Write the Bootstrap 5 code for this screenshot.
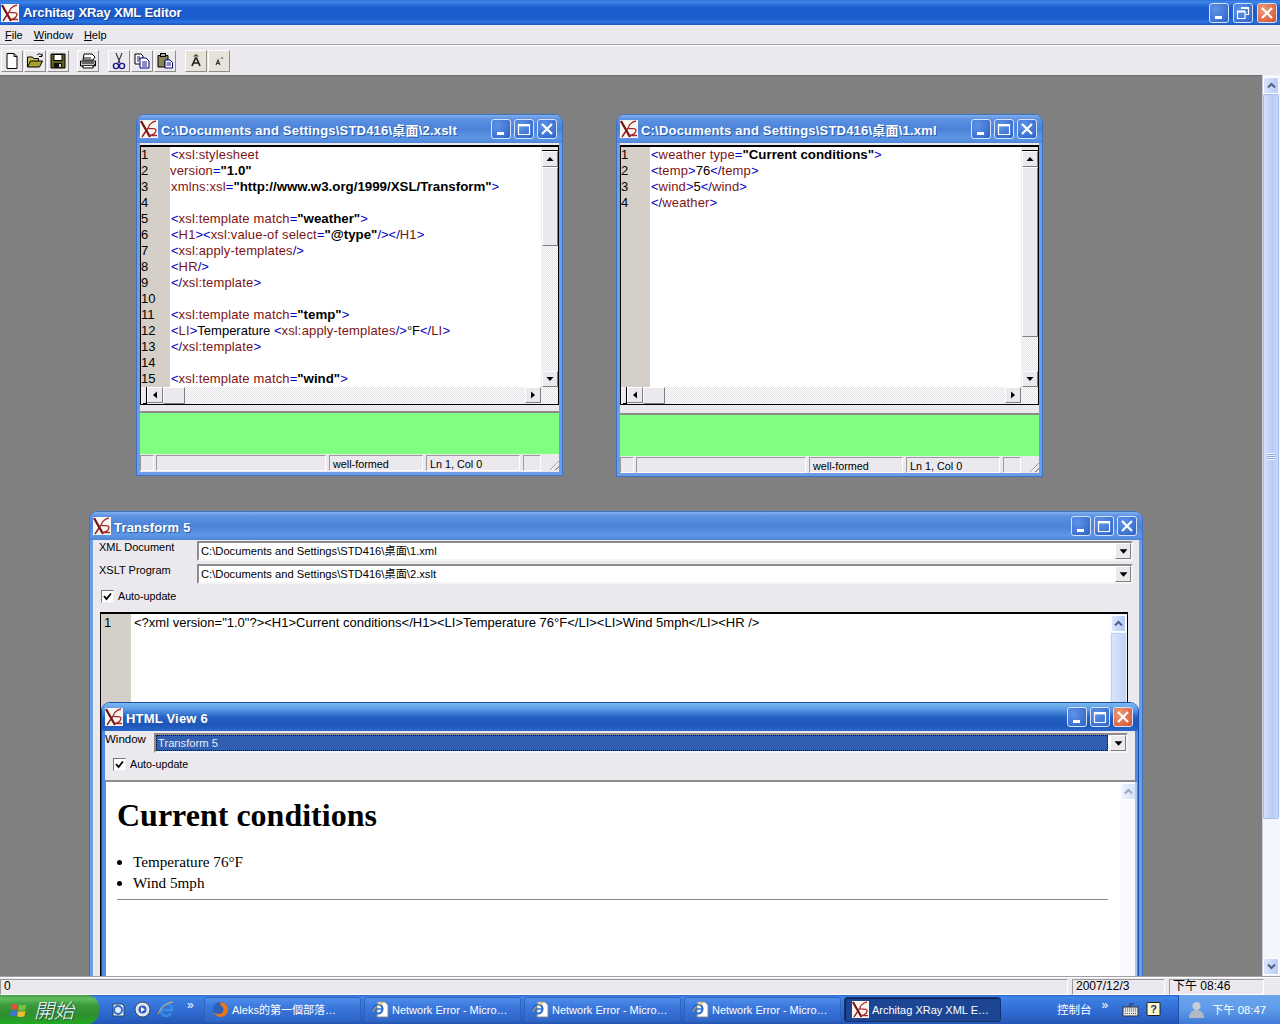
<!DOCTYPE html>
<html lang="zh-Hant">
<head>
<meta charset="UTF-8">
<title>Architag XRay XML Editor</title>
<link href="https://cdn.jsdelivr.net/npm/bootstrap@5.3.0/dist/css/bootstrap.min.css" rel="stylesheet">
<style>
html, body { height: 100%; overflow: hidden; }
body { width: 1280px; height: 1024px; background: #ebe9ed; color: #000; font: 13px/16px "Liberation Sans", "Noto Sans CJK TC", sans-serif; }
.app { height: 1024px; }

/* main window chrome */
.main-title { height: 25px; background: linear-gradient(#2f6fd8 0, #3f86ea 2px, #1d5fd0 7px, #1a5ccb 18px, #2a74e4 22px, #1a55b8 25px); color: #fff; padding: 0 3px 0 1px; }
.title-text { font-weight: 700; font-size: 13px; letter-spacing: -.1px; text-shadow: 1px 1px 0 #16408c; white-space: nowrap; padding-top: 1px; }
.logo { width: 18px; height: 18px; flex: none; }
.wbtn { width: 20px; height: 20px; flex: none; border: 1px solid #d5e2f8; border-radius: 3px; background: radial-gradient(circle at 30% 30%, #5f93e8, #2c62c8); display: flex; align-items: center; justify-content: center; }
.wbtn svg { width: 14px; height: 14px; }
.wbtn.close { background: radial-gradient(circle at 30% 30%, #ef9a78, #d6502c); }
.menubar { height: 20px; padding-left: 5px; gap: 11px; font-size: 11px; line-height: 20px; border-bottom: 1px solid #9d9da1; box-shadow: 0 1px 0 #fff; }
.toolbar { height: 29px; padding: 4px 0 0 1px; margin-top: 1px; }
.tbtn { width: 22px; height: 22px; margin-right: 1px; flex: none; background: #ece9ec; border: 1px solid; border-color: #fff #8d8d8d #8d8d8d #fff; display: flex; align-items: center; justify-content: center; padding: 0; }
.tbtn svg { width: 18px; height: 18px; }
.tbtn.warm { background: #e6e3d8; }
.tsep { width: 8px; flex: none; }
.tsep.sm { width: 7px; }
.workspace { height: 901px; }
.canvas { background: #808080; border-top: 1px solid #6b6b6b; overflow: hidden; }
.main-status { height: 19px; border-top: 1px solid #a0a0a4; box-shadow: inset 0 1px 0 #fff; font-size: 12px; padding-top: 2px; }
.spanel { border: 1px solid; border-color: #9a9a9a #fff #fff #9a9a9a; height: 16px; line-height: 13px; padding-left: 3px; white-space: nowrap; }

/* xp scrollbar on the workspace */
.xp-scroll { width: 18px; background: #f3f6fd; border-left: 1px solid #ccd; padding: 2px 1px 1px 0; }
.xp-btn { height: 17px; flex: none; border: 1px solid #fff; border-radius: 2px; background: linear-gradient(90deg, #dbe6fd, #b7cbf8); display: flex; align-items: center; justify-content: center; }
.xp-btn svg { width: 9px; height: 7px; }
.xp-thumb { height: 725px; flex: none; border: 1px solid #a8bdea; border-radius: 2px; background: linear-gradient(90deg, #d4e1fc, #b9ccf8 60%, #c8d8fb); display: flex; align-items: center; justify-content: center; }
.xp-grip { width: 8px; height: 7px; background: repeating-linear-gradient(#eef3fe 0 1px, #8fa9e0 1px 2px); }

/* mdi child windows */
.win { position: absolute; border: 3px solid #6c9ee8; border-top: 0; border-radius: 8px 8px 0 0; background: #ebe9ed; box-shadow: 0 0 0 1px #3c72c4; }
.win-a { left: 137px; top: 39px; width: 425px; height: 360px; }
.win-b { left: 617px; top: 39px; width: 425px; height: 361px; }
.win-c { left: 90px; top: 436px; width: 1052px; height: 500px; }
.win-d { left: 102px; top: 627px; width: 1036px; height: 300px; border-color: #4f8ae0; box-shadow: 0 0 0 1px #1c4fa8; }
.win-title { height: 28px; margin: 0 -3px; padding: 0 5px 0 3px; gap: 3px; color: #fff; border-radius: 7px 7px 0 0; background: linear-gradient(#7fb0ee 0, #5d92e2 4px, #4b82d8 14px, #5f97e6 23px, #4f86d8 28px); flex: none; }
.win-title .wbtns { gap: 3px; }
.win-d .win-title { background: linear-gradient(#7db8f2 0, #5c9ce6 6px, #2462c4 14px, #1d56b8 22px, #2a68cc 28px); }
.win-name { font-weight: 700; font-size: 13px; letter-spacing: .2px; text-shadow: 1px 1px 0 #2b5aa8; white-space: nowrap; padding-top: 3px; }

/* code editor */
.editor { border: 1px solid #000; border-top-width: 2px; background: #fff; overflow: hidden; margin-top: 2px; flex: none; }
.gutter { width: 29px; flex: none; background: #d4d0c8; padding-left: 0; }
.code { padding-left: 1px; min-width: 0; overflow: hidden; }
.code div, .gutter div { height: 16px; line-height: 16px; white-space: nowrap; }
.code .ml { margin-left: -1px; }
.b { color: #0000c0; }
.m { color: #7c1414; letter-spacing: .15px; }
.v { font-weight: 700; color: #000; font-size: 13.3px; }

/* classic scrollbars */
.sbar-v { width: 17px; flex: none; border-left: 1px solid #f0f0f0; background: repeating-conic-gradient(#fff 0 25%, #e2e0e4 0 50%) 0 0/2px 2px; }
.sbar-box { height: 4px; flex: none; border-bottom: 1px solid #000; background: #ebe9ed; }
.sbtn { width: 16px; height: 16px; flex: none; background: #ebe9ed; border: 1px solid; border-color: #fff #808080 #808080 #fff; display: flex; align-items: center; justify-content: center; }
.sbtn svg { width: 8px; height: 8px; }
.sthumb { width: 16px; flex: none; background: #ebe9ed; border: 1px solid; border-color: #fff #808080 #808080 #fff; }
.sbar-h { height: 17px; background: repeating-conic-gradient(#fff 0 25%, #e2e0e4 0 50%) 0 0/2px 2px; padding-right: 17px; }
.sbar-h .hbox { width: 4px; flex: none; border-right: 1px solid #000; border-bottom: 1px solid #000; background: #ebe9ed; margin-left: 2px; }
.hthumb { width: 22px; flex: none; background: #ebe9ed; border: 1px solid; border-color: #fff #808080 #808080 #fff; }
.split { height: 8px; flex: none; border-bottom: 2px solid #8c8c8c; }
.split.wide { height: 10px; }
.ok-pane { height: 41px; flex: none; background: #80ff80; }
.win-status { height: 18px; flex: none; padding: 1px 0 0 0; font-size: 10.8px; }
.cell { height: 16px; line-height: 16px; border: 1px solid; border-color: #9a9a9a #fff #fff #9a9a9a; padding-left: 3px; white-space: nowrap; flex: none; }
.c1 { width: 14px; }
.c2 { width: 170px; margin-left: 2px; }
.c3 { width: 94px; margin-left: 3px; }
.c4 { width: 18px; margin-left: 3px; }
.grip { width: 12px; height: 12px; margin-top: 3px; background: repeating-linear-gradient(135deg, transparent 0 2px, #9a9a9a 2px 3px, #fff 3px 4px); clip-path: polygon(100% 0, 100% 100%, 0 100%); }

/* form rows in transform and html view */
.combo { height: 20px; background: #fff; border: 2px solid; border-color: #8c8c8c #f4f4f4 #f4f4f4 #8c8c8c; padding-left: 0; line-height: 16px; font-size: 11.2px; white-space: nowrap; }
.combo .txt { padding-left: 2px; }
.combo .drop { width: 16px; height: 16px; flex: none; background: #ebe9ed; border: 1px solid; border-color: #fff #808080 #808080 #fff; display: flex; align-items: center; justify-content: center; }
.combo .drop svg { width: 9px; height: 9px; }
.combo.sel .txt { background: #2f5fae; color: #e6ecf8; outline: 1px dotted #111; outline-offset: -1px; margin-right: 2px; }
.flabel { width: 104px; flex: none; padding-left: 6px; line-height: 12px; height: 18px; font-size: 11px; }
.flabel.win-lab { width: 49px; padding-left: 0; font-size: 11.5px; }
.checkbox { width: 13px; height: 13px; flex: none; background: #fff; border: 1px solid; border-color: #777 #eee #eee #777; display: flex; align-items: center; justify-content: center; }
.checkbox svg { width: 9px; height: 9px; }
.auto { gap: 4px; font-size: 10.7px; }
.auto-c { height: 16px; padding-left: 8px; }
.auto-d { height: 18px; padding-left: 8px; margin-bottom: 7px; }
.rowc { height: 24px; }
.rowc.first { padding-top: 1px; }
.rowd { height: 24px; padding-top: 2px; }
.xp-small { width: 17px; flex: none; background: #f3f6fd; }
.xp-small .up { height: 17px; margin: 1px; border: 1px solid #fff; background: linear-gradient(90deg, #dbe6fd, #b7cbf8); display: flex; align-items: center; justify-content: center; flex: none; }
.xp-small .up svg { width: 9px; height: 7px; }
.xp-small .th { flex: none; height: 90px; margin: 0 1px; border: 1px solid #c4d2f0; background: linear-gradient(90deg, #d8e4fc, #c4d4f8); }
.pale { opacity: .55; }
.combo-c { margin-right: 6px; }
.combo-d { margin-right: 7px; }
.editor-c { margin: 8px 11px 0 7px; flex: 1 1 auto; }
.editor-c .gutter { width: 30px; padding: 1px 0 0 3px; }
.editor-c .code { padding: 1px 0 0 3px; }
.html-view { border-top: 2px solid #8c8c8c; border-left: 1px solid #8c8c8c; background: #fff; font-family: "Liberation Serif", "Noto Serif CJK TC", serif; }
.html-body { padding: 15px 12px 0 11px; }
.html-body h1 { font: 700 32px/37px "Liberation Serif", serif; margin: 0 0 17px; }
.html-body ul { margin: 0 0 6px; padding-left: 16px; font-size: 15.2px; line-height: 21px; }
.html-body hr { margin: 0; opacity: 1; border: 0; border-top: 1px solid #888; width: 991px; }

/* taskbar */
.taskbar { height: 29px; background: linear-gradient(#2a63c8 0, #3f86ea 2px, #3a7be0 6px, #2d66cc 20px, #2356b6 29px); color: #fff; font-size: 11px; }
.start { width: 99px; flex: none; background: linear-gradient(#4a9a4c 0, #5fbf5c 4px, #3a9a3c 10px, #2f8f30 20px, #1faa20 29px); border-radius: 0 12px 12px 0; padding-left: 10px; gap: 6px; font: italic 300 20px/29px "Noto Sans CJK TC", sans-serif; text-shadow: 1px 1px 1px #245; }
.quick { width: 105px; flex: none; padding-left: 11px; gap: 7px; }
.quick svg { width: 17px; height: 17px; flex: none; }
.chev { font-size: 12px; line-height: 12px; margin-left: 5px; margin-top: -10px; }
.task { width: 157px; height: 25px; margin-right: 3px; flex: none; gap: 3px; padding-left: 7px; border-radius: 3px; border: 1px solid #2f63bd; background: linear-gradient(#4f8fea, #3a77dc 40%, #2f66c9); white-space: nowrap; overflow: hidden; }
.task svg { width: 17px; height: 17px; flex: none; }
.task.on { background: #1c4694; border-color: #123270; box-shadow: inset 1px 1px 1px #0e2558; }
.cp { width: 118px; flex: none; padding-left: 53px; gap: 5px; font-size: 11.5px; }
.tray-ic { gap: 6px; width: 56px; flex: none; }
.tray-ic svg { width: 17px; height: 17px; }
.tray { flex: 1; height: 29px; background: linear-gradient(#6aa6ee, #5e9ae8 50%, #3f7bd8); padding-left: 9px; gap: 7px; border-left: 1px solid #1d4fa8; font-size: 11.3px; }
.tray svg { width: 17px; height: 20px; flex: none; }
</style>
</head>
<body>
<svg width="0" height="0" class="position-absolute">
  <symbol id="x2" viewBox="0 0 18 18">
    <rect width="18" height="18" fill="#fbf6f2"/>
    <path d="M1 1 L10 17" stroke="#741212" stroke-width="2.2" fill="none"/>
    <path d="M2 17 L8 8" stroke="#8a1a1a" stroke-width="1.4" fill="none"/>
    <path d="M16 1 C11 2 8 6 8.5 8 C11 10 15 7 16 10 C16 13 13 15 9 15.5 L17 15.5" stroke="#a62828" stroke-width="1.3" fill="none"/>
  </symbol>
  <symbol id="min" viewBox="0 0 14 14"><rect x="3" y="10" width="7" height="3" fill="#fff"/></symbol>
  <symbol id="max" viewBox="0 0 14 14"><path d="M1.5 2.5h11v10h-11z" fill="none" stroke="#fff" stroke-width="1.2"/><rect x="1" y="2" width="12" height="2.4" fill="#fff"/></symbol>
  <symbol id="rest" viewBox="0 0 14 14"><path d="M5 1.5h7.5v7H10M1.5 5.5h7.5v7H1.5z" fill="none" stroke="#fff" stroke-width="1.2"/><rect x="1" y="4.5" width="8" height="2" fill="#fff"/><rect x="5" y="1" width="8" height="2" fill="#fff"/></symbol>
  <symbol id="cls" viewBox="0 0 14 14"><path d="M2 2l10 10M12 2L2 12" stroke="#fff" stroke-width="2.2"/></symbol>
  <symbol id="aup" viewBox="0 0 8 8"><path d="M4 2L7.5 6H.5z" fill="#000"/></symbol>
  <symbol id="adn" viewBox="0 0 8 8"><path d="M4 6L.5 2h7z" fill="#000"/></symbol>
  <symbol id="alf" viewBox="0 0 8 8"><path d="M2 4l4-3.5v7z" fill="#000"/></symbol>
  <symbol id="art" viewBox="0 0 8 8"><path d="M6 4L2 .5v7z" fill="#000"/></symbol>
  <symbol id="chk" viewBox="0 0 9 9"><path d="M1 4l2.5 3L8 1.5" stroke="#000" stroke-width="1.8" fill="none"/></symbol>
  <symbol id="xpup" viewBox="0 0 9 7"><path d="M1 5.5l3.5-3.5 3.5 3.5" stroke="#4d6185" stroke-width="2" fill="none"/></symbol>
  <symbol id="iedoc" viewBox="0 0 17 17">
    <path d="M5 1h8l3 3v12H5z" fill="#fff" stroke="#8a8a8a"/>
    <circle cx="6" cy="8" r="4.5" fill="none" stroke="#2a6fd0" stroke-width="2.2"/>
    <path d="M2 8h8" stroke="#2a6fd0" stroke-width="1.6"/>
    <path d="M1 11C3 5 9 2 11 3" stroke="#e8b030" stroke-width="1" fill="none"/>
  </symbol>
</svg>

<div class="app d-flex flex-column">
  <!-- main title -->
  <div class="main-title d-flex align-items-center">
    <svg class="logo me-1"><use href="#x2"/></svg>
    <span class="title-text">Architag XRay XML Editor</span>
    <div class="ms-auto d-flex gap-1">
      <div class="wbtn"><svg><use href="#min"/></svg></div>
      <div class="wbtn"><svg><use href="#rest"/></svg></div>
      <div class="wbtn close"><svg><use href="#cls"/></svg></div>
    </div>
  </div>
  <div class="menubar d-flex">
    <span><u>F</u>ile</span><span><u>W</u>indow</span><span><u>H</u>elp</span>
  </div>
  <div class="toolbar d-flex">
    <button class="tbtn" title="New"><svg viewBox="0 0 18 18"><path d="M4 1.5h7l3 3v12H4z" fill="#fff" stroke="#000"/><path d="M11 1.5v3h3" fill="none" stroke="#000"/></svg></button>
    <button class="tbtn" title="Open"><svg viewBox="0 0 18 18"><path d="M1.5 15V5h5l1 1.5h5V9" fill="#c8c060" stroke="#000"/><path d="M1.5 15l3-6h12l-3 6z" fill="#a8a030" stroke="#000"/><path d="M11 3c2-2 4-1 5 1M16 1.5V4.5h-3" fill="none" stroke="#000"/></svg></button>
    <button class="tbtn" title="Save"><svg viewBox="0 0 18 18"><path d="M2 2h14v14H2z" fill="#606018" stroke="#000"/><rect x="5" y="2.5" width="8" height="6" fill="#fff" stroke="#000"/><rect x="5" y="11" width="8" height="5" fill="#111"/><rect x="10" y="12" width="2" height="3" fill="#ccc"/></svg></button>
    <div class="tsep sm"></div>
    <button class="tbtn" title="Print"><svg viewBox="0 0 18 18"><path d="M5 2h8l3 3-2 3H4z" fill="#fff" stroke="#000"/><path d="M1.5 9h15v5h-15z" fill="#c8c8c8" stroke="#000"/><path d="M3 14h11l2-2M4 6h8M3 11h12" stroke="#000" fill="none"/><path d="M4 14v2h10v-2" fill="#fff" stroke="#000"/></svg></button>
    <div class="tsep"></div>
    <button class="tbtn" title="Cut"><svg viewBox="0 0 18 18"><path d="M6 1l4 10M12 1L8 11" stroke="#303030" stroke-width="1.1" fill="none"/><circle cx="6" cy="14" r="2.6" fill="none" stroke="#1a1a90" stroke-width="1.4"/><circle cx="12" cy="14" r="2.6" fill="none" stroke="#1a1a90" stroke-width="1.4"/></svg></button>
    <button class="tbtn" title="Copy"><svg viewBox="0 0 18 18"><path d="M2 2h6l2 2v8H2z" fill="#fff" stroke="#000"/><path d="M7 6h6l3 3v7H7z" fill="#fff" stroke="#00007a"/><path d="M4 5h3M4 7h3M4 9h2M9 10h5M9 12h5M9 14h5" stroke="#00007a" stroke-width=".9"/></svg></button>
    <button class="tbtn" title="Paste"><svg viewBox="0 0 18 18"><path d="M2 3.5h10V9H9v6H2z" fill="#8a8650" stroke="#000"/><rect x="4.5" y="1.5" width="5" height="3" fill="#aaa" stroke="#000"/><path d="M9 8h5l2.5 2.5V16H9z" fill="#fff" stroke="#00007a"/><path d="M10.5 11h4.5M10.5 13h4.5" stroke="#00007a" stroke-width=".9"/></svg></button>
    <div class="tsep"></div>
    <button class="tbtn warm" title="Larger"><svg viewBox="0 0 18 18"><path d="M5 14L8.5 6h1L13 14M6.5 11h5" stroke="#222" stroke-width="1.7" fill="none"/><path d="M9 2l3 2.5H6z" fill="#4a4a2a"/></svg></button>
    <button class="tbtn warm" title="Smaller"><svg viewBox="0 0 18 18"><path d="M6 13l2-5 2 5M6.8 11.5h2.4" stroke="#333" stroke-width="1.1" fill="none"/><path d="M12 5l1.5 1.6h-3z" fill="#4a4a2a"/></svg></button>
  </div>

  <div class="workspace d-flex">
    <div class="canvas flex-grow-1 position-relative">

      <!-- 2.xslt -->
      <div class="win win-a d-flex flex-column">
        <div class="win-title d-flex align-items-center">
          <svg class="logo"><use href="#x2"/></svg>
          <span class="win-name">C:\Documents and Settings\STD416\桌面\2.xslt</span>
          <div class="wbtns ms-auto d-flex"><div class="wbtn"><svg><use href="#min"/></svg></div><div class="wbtn"><svg><use href="#max"/></svg></div><div class="wbtn"><svg><use href="#cls"/></svg></div></div>
        </div>
        <div class="editor d-flex flex-column">
          <div class="d-flex" style="height:240px">
            <div class="gutter"><div>1</div><div>2</div><div>3</div><div>4</div><div>5</div><div>6</div><div>7</div><div>8</div><div>9</div><div>10</div><div>11</div><div>12</div><div>13</div><div>14</div><div>15</div></div>
            <div class="code flex-grow-1">
<div><span class="b">&lt;</span><span class="m">xsl:stylesheet</span></div>
<div class="ml"><span class="m">version</span><span class="b">=</span><span class="v">"1.0"</span></div>
<div><span class="m">xmlns:xsl</span><span class="b">=</span><span class="v">"http://www.w3.org/1999/XSL/Transform"</span><span class="b">&gt;</span></div>
<div></div>
<div><span class="b">&lt;</span><span class="m">xsl:template match</span><span class="b">=</span><span class="v">"weather"</span><span class="b">&gt;</span></div>
<div><span class="b">&lt;</span><span class="m">H1</span><span class="b">&gt;&lt;</span><span class="m">xsl:value-of select</span><span class="b">=</span><span class="v">"@type"</span><span class="b">/&gt;&lt;/</span><span class="m">H1</span><span class="b">&gt;</span></div>
<div><span class="b">&lt;</span><span class="m">xsl:apply-templates</span><span class="b">/&gt;</span></div>
<div><span class="b">&lt;</span><span class="m">HR</span><span class="b">/&gt;</span></div>
<div><span class="b">&lt;/</span><span class="m">xsl:template</span><span class="b">&gt;</span></div>
<div></div>
<div><span class="b">&lt;</span><span class="m">xsl:template match</span><span class="b">=</span><span class="v">"temp"</span><span class="b">&gt;</span></div>
<div><span class="b">&lt;</span><span class="m">LI</span><span class="b">&gt;</span>Temperature <span class="b">&lt;</span><span class="m">xsl:apply-templates</span><span class="b">/&gt;</span>°F<span class="b">&lt;/</span><span class="m">LI</span><span class="b">&gt;</span></div>
<div><span class="b">&lt;/</span><span class="m">xsl:template</span><span class="b">&gt;</span></div>
<div></div>
<div><span class="b">&lt;</span><span class="m">xsl:template match</span><span class="b">=</span><span class="v">"wind"</span><span class="b">&gt;</span></div>
            </div>
            <div class="sbar-v d-flex flex-column">
              <div class="sbar-box"></div>
              <div class="sbtn"><svg><use href="#aup"/></svg></div>
              <div class="sthumb" style="height:79px"></div>
              <div class="flex-grow-1"></div>
              <div class="sbtn"><svg><use href="#adn"/></svg></div>
            </div>
          </div>
          <div class="sbar-h d-flex">
            <div class="hbox"></div>
            <div class="sbtn"><svg><use href="#alf"/></svg></div>
            <div class="hthumb"></div>
            <div class="flex-grow-1"></div>
            <div class="sbtn"><svg><use href="#art"/></svg></div>
          </div>
        </div>
        <div class="split"></div>
        <div class="ok-pane"></div>
        <div class="win-status d-flex">
          <div class="cell c1"></div><div class="cell c2"></div>
          <div class="cell c3">well-formed</div><div class="cell c3">Ln 1, Col 0</div>
          <div class="cell c4"></div><div class="grip ms-auto"></div>
        </div>
      </div>

      <!-- 1.xml -->
      <div class="win win-b d-flex flex-column">
        <div class="win-title d-flex align-items-center">
          <svg class="logo"><use href="#x2"/></svg>
          <span class="win-name">C:\Documents and Settings\STD416\桌面\1.xml</span>
          <div class="wbtns ms-auto d-flex"><div class="wbtn"><svg><use href="#min"/></svg></div><div class="wbtn"><svg><use href="#max"/></svg></div><div class="wbtn"><svg><use href="#cls"/></svg></div></div>
        </div>
        <div class="editor d-flex flex-column">
          <div class="d-flex" style="height:240px">
            <div class="gutter"><div>1</div><div>2</div><div>3</div><div>4</div></div>
            <div class="code flex-grow-1">
<div><span class="b">&lt;</span><span class="m">weather type</span><span class="b">=</span><span class="v">"Current conditions"</span><span class="b">&gt;</span></div>
<div><span class="b">&lt;</span><span class="m">temp</span><span class="b">&gt;</span>76<span class="b">&lt;/</span><span class="m">temp</span><span class="b">&gt;</span></div>
<div><span class="b">&lt;</span><span class="m">wind</span><span class="b">&gt;</span>5<span class="b">&lt;/</span><span class="m">wind</span><span class="b">&gt;</span></div>
<div><span class="b">&lt;/</span><span class="m">weather</span><span class="b">&gt;</span></div>
            </div>
            <div class="sbar-v d-flex flex-column">
              <div class="sbar-box"></div>
              <div class="sbtn"><svg><use href="#aup"/></svg></div>
              <div class="sthumb" style="height:170px"></div>
              <div class="flex-grow-1"></div>
              <div class="sbtn"><svg><use href="#adn"/></svg></div>
            </div>
          </div>
          <div class="sbar-h d-flex">
            <div class="hbox"></div>
            <div class="sbtn"><svg><use href="#alf"/></svg></div>
            <div class="hthumb"></div>
            <div class="flex-grow-1"></div>
            <div class="sbtn"><svg><use href="#art"/></svg></div>
          </div>
        </div>
        <div class="split wide"></div>
        <div class="ok-pane"></div>
        <div class="win-status d-flex">
          <div class="cell c1"></div><div class="cell c2"></div>
          <div class="cell c3">well-formed</div><div class="cell c3">Ln 1, Col 0</div>
          <div class="cell c4"></div><div class="grip ms-auto"></div>
        </div>
      </div>

      <!-- Transform 5 -->
      <div class="win win-c d-flex flex-column">
        <div class="win-title d-flex align-items-center">
          <svg class="logo"><use href="#x2"/></svg>
          <span class="win-name">Transform 5</span>
          <div class="wbtns ms-auto d-flex"><div class="wbtn"><svg><use href="#min"/></svg></div><div class="wbtn"><svg><use href="#max"/></svg></div><div class="wbtn"><svg><use href="#cls"/></svg></div></div>
        </div>
        <div class="d-flex rowc first">
          <div class="flabel">XML Document</div>
          <div class="combo combo-c d-flex flex-grow-1"><span class="flex-grow-1 txt">C:\Documents and Settings\STD416\桌面\1.xml</span><span class="drop"><svg><use href="#adn"/></svg></span></div>
        </div>
        <div class="d-flex rowc">
          <div class="flabel">XSLT Program</div>
          <div class="combo combo-c d-flex flex-grow-1"><span class="flex-grow-1 txt">C:\Documents and Settings\STD416\桌面\2.xslt</span><span class="drop"><svg><use href="#adn"/></svg></span></div>
        </div>
        <div class="auto auto-c d-flex align-items-center">
          <span class="checkbox"><svg><use href="#chk"/></svg></span><span>Auto-update</span>
        </div>
        <div class="editor editor-c d-flex">
          <div class="gutter"><div>1</div></div>
          <div class="code flex-grow-1"><div>&lt;?xml version="1.0"?&gt;&lt;H1&gt;Current conditions&lt;/H1&gt;&lt;LI&gt;Temperature 76°F&lt;/LI&gt;&lt;LI&gt;Wind 5mph&lt;/LI&gt;&lt;HR /&gt;</div></div>
          <div class="xp-small d-flex flex-column"><div class="up"><svg><use href="#xpup"/></svg></div><div class="th"></div></div>
        </div>
      </div>

      <!-- HTML View 6 -->
      <div class="win win-d d-flex flex-column">
        <div class="win-title d-flex align-items-center">
          <svg class="logo"><use href="#x2"/></svg>
          <span class="win-name">HTML View 6</span>
          <div class="wbtns ms-auto d-flex"><div class="wbtn"><svg><use href="#min"/></svg></div><div class="wbtn"><svg><use href="#max"/></svg></div><div class="wbtn close"><svg><use href="#cls"/></svg></div></div>
        </div>
        <div class="d-flex rowd">
          <div class="flabel win-lab">Window</div>
          <div class="combo combo-d sel d-flex flex-grow-1"><span class="flex-grow-1 txt">Transform 5</span><span class="drop"><svg><use href="#adn"/></svg></span></div>
        </div>
        <div class="auto auto-d d-flex align-items-center">
          <span class="checkbox"><svg><use href="#chk"/></svg></span><span>Auto-update</span>
        </div>
        <div class="html-view d-flex flex-grow-1">
          <div class="html-body flex-grow-1">
            <h1>Current conditions</h1>
            <ul><li>Temperature 76°F</li><li>Wind 5mph</li></ul>
            <hr>
          </div>
          <div class="xp-small d-flex flex-column pale"><div class="up"><svg><use href="#xpup"/></svg></div></div>
        </div>
      </div>
    </div>
    <div class="xp-scroll d-flex flex-column">
      <div class="xp-btn"><svg><use href="#xpup"/></svg></div>
      <div class="xp-thumb"><div class="xp-grip"></div></div>
      <div class="flex-grow-1"></div>
      <div class="xp-btn"><svg viewBox="0 0 9 7"><path d="M1 1.5l3.5 3.5 3.5-3.5" stroke="#4d6185" stroke-width="2" fill="none"/></svg></div>
    </div>
  </div>

  <div class="main-status d-flex">
    <div class="spanel" style="width:1068px">0</div>
    <div class="spanel ms-1" style="width:93px">2007/12/3</div>
    <div class="spanel ms-1" style="width:95px">下午 08:46</div>
  </div>

  <!-- xp taskbar -->
  <div class="taskbar d-flex align-items-center">
    <div class="start d-flex align-items-center">
      <svg width="18" height="18" viewBox="0 0 20 20"><path d="M2 4c2-1 4-1 7 0l-1 6c-2-1-5-1-7 0z" fill="#e0503a"/><path d="M10 4c2 1 5 1 8 0l-1 6c-3 1-6 1-8 0z" fill="#7ac040"/><path d="M1 11c2-1 5-1 7 0l-1 6c-2-1-5-1-7 0z" fill="#3a78d8"/><path d="M9 11c2 1 5 1 8 0l-1 6c-3 1-6 1-8 0z" fill="#f0c030"/></svg>
      <span>開始</span>
    </div>
    <div class="quick d-flex align-items-center">
      <svg viewBox="0 0 17 17"><path d="M3 3h9l2 2v10H3z" fill="#e8eef8" stroke="#345"/><circle cx="8" cy="9" r="4" fill="none" stroke="#2a6fd0" stroke-width="2"/></svg>
      <svg viewBox="0 0 17 17"><circle cx="8.5" cy="8.5" r="7.5" fill="#dfe6f2" stroke="#345"/><circle cx="8.5" cy="8.5" r="4" fill="#2f5fc0"/><path d="M7 6l4 2.5L7 11z" fill="#fff"/></svg>
      <svg viewBox="0 0 17 17"><path d="M3 9h11c0-4-2-6-5-6S3 5 3 9c0 4 2 6 5 6 2 0 4-1 5-3" fill="none" stroke="#3a8ae8" stroke-width="2.4"/><path d="M0 13C3 6 10 1 15 1" stroke="#e8c050" stroke-width="1" fill="none"/></svg>
      <span class="chev">»</span>
    </div>
    <div class="task d-flex align-items-center">
      <svg viewBox="0 0 17 17"><circle cx="8.5" cy="8.5" r="7.5" fill="#2c5fb8"/><path d="M8.5 1a7.5 7.5 0 1 1-7 10c1 1 3 2 5 2 3 0 5-2 5-4.5S10 5 8 4c1-1 .5-2 .5-3z" fill="#e8761a"/></svg>
      <span>Aleks的第一個部落…</span>
    </div>
    <div class="task d-flex align-items-center"><svg><use href="#iedoc"/></svg><span>Network Error - Micro…</span></div>
    <div class="task d-flex align-items-center"><svg><use href="#iedoc"/></svg><span>Network Error - Micro…</span></div>
    <div class="task d-flex align-items-center"><svg><use href="#iedoc"/></svg><span>Network Error - Micro…</span></div>
    <div class="task on d-flex align-items-center"><svg><use href="#x2"/></svg><span>Architag XRay XML E…</span></div>
    <div class="cp d-flex align-items-center"><span>控制台</span><span class="chev">»</span></div>
    <div class="tray-ic d-flex align-items-center">
      <svg viewBox="0 0 17 17"><rect x="1" y="6" width="15" height="9" fill="#e8e8e8" stroke="#333"/><path d="M3 8h11M3 10h11M3 12.5h11" stroke="#555" stroke-dasharray="1 1"/><path d="M8 6V3h4" stroke="#333" fill="none"/></svg>
      <svg viewBox="0 0 17 17"><rect x="2" y="1.5" width="13" height="13" rx="1" fill="#fff8c8" stroke="#222"/><text x="8.5" y="12" font-size="11" font-weight="700" text-anchor="middle" fill="#203070" font-family="Liberation Sans">?</text></svg>
    </div>
    <div class="tray d-flex align-items-center">
      <svg viewBox="0 0 17 20"><circle cx="8.5" cy="6" r="4" fill="#c8ccd4"/><path d="M1 18c0-6 4-8 7.5-8s7.5 2 7.5 8z" fill="#b4b8c4"/></svg>
      <span>下午 08:47</span>
    </div>
  </div>
</div>
<script src="https://cdn.jsdelivr.net/npm/bootstrap@5.3.0/dist/js/bootstrap.bundle.min.js"></script>
</body>
</html>
